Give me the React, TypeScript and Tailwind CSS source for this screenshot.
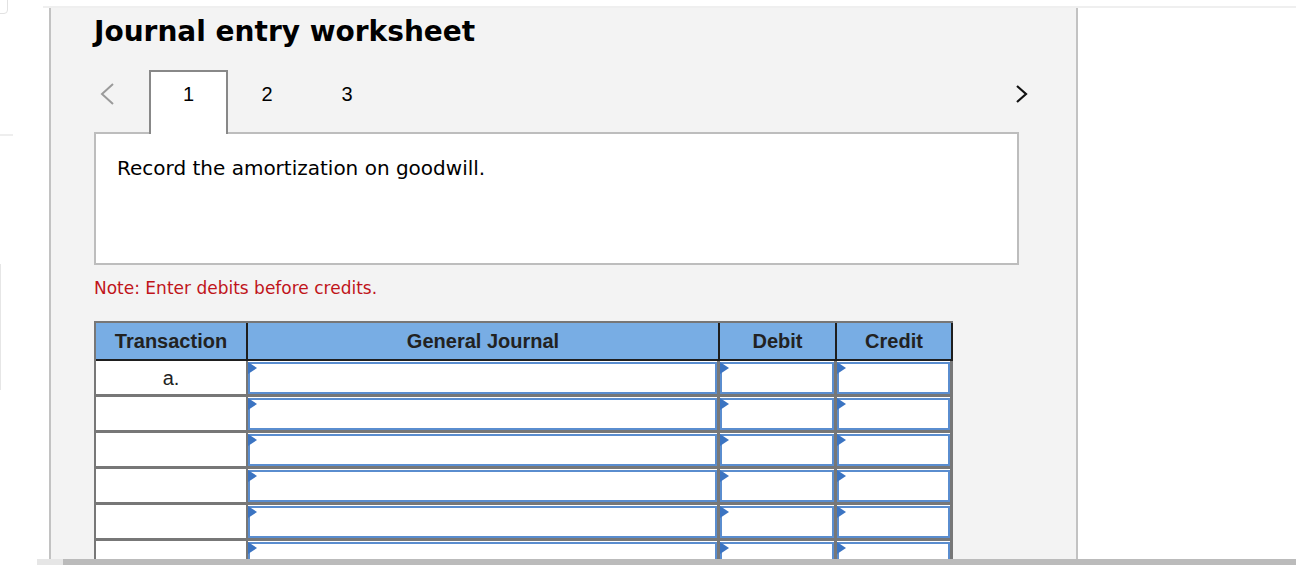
import React from 'react';

const COLS = ['w-[152px]', 'w-[472px]', 'w-[117px]', 'w-[116px]'];
const ROWS = ['a.', '', '', '', '', ''];

const verdana = { fontFamily: '"DejaVu Sans", Verdana, sans-serif' };
const arial = { fontFamily: '"Liberation Sans", Arial, sans-serif' };

const EntryInput = () => (
  <div className="relative h-full w-full border-2 border-[#5a8dcf] bg-white">
    <div className="absolute left-[-2px] top-[-2px] h-0 w-0 border-y-[6px] border-l-[9px] border-y-transparent border-l-[#3b74c2]" />
  </div>
);

const App = () => {
  return (
    <div className="relative h-[565px] w-[1296px] overflow-hidden bg-white">
      {/* stray page chrome on the left */}
      <div className="absolute left-[-8px] top-[-6px] h-[20px] w-[16px] rounded-[4px] border border-[#e2e2e2]" />
      <div className="absolute left-0 top-[134px] h-[2px] w-[13px] bg-[#eeeeee]" />
      <div className="absolute left-0 top-[264px] h-[126px] w-[1px] bg-[#e6e6e6]" />

      <div className="ml-[43px] mt-[6px] h-[2px] bg-[#efefef]" />

      <div className="ml-[49px] h-[557px] w-[1029px] border-x-2 border-[#c2c2c2] bg-[#f3f3f3] pl-[43px]">
        <h1 className="pt-[6px] text-[28px] font-bold leading-[36px] text-black" style={verdana}>
          Journal entry worksheet
        </h1>

        <div className="mt-[20px] flex h-[62px] items-start text-[20px] leading-[24px] text-black" style={arial}>
          <div className="flex h-[48px] w-[55px] items-center pl-[5px]">
            <svg width="16" height="24" viewBox="0 0 16 24">
              <path d="M14 2 L3 12 L14 22" fill="none" stroke="#9a9a9a" strokeWidth="2" />
            </svg>
          </div>
          <div className="relative z-10 flex h-[64px] w-[79px] justify-center border-x-2 border-t-2 border-[#888888] bg-white pt-[10px]">
            1
          </div>
          <div className="flex w-[78px] justify-center pt-[12px]">2</div>
          <div className="flex w-[82px] justify-center pt-[12px]">3</div>
          <div className="ml-auto mr-[46px] flex h-[48px] items-center">
            <svg width="16" height="24" viewBox="0 0 16 24">
              <path d="M3 4 L12 12 L3 20" fill="none" stroke="#111" strokeWidth="2.2" />
            </svg>
          </div>
        </div>

        <div className="h-[133px] w-[925px] border-2 border-[#bdbdbd] bg-white px-[21px] pt-[20px] text-[20px] leading-[28px] text-black" style={verdana}>
          Record the amortization on goodwill.
        </div>

        <p className="mt-[12px] text-[17px] leading-[22px] text-[#c0141a]" style={verdana}>
          Note: Enter debits before credits.
        </p>

        <div className="mt-[22px] w-[859px] border-l-2 border-t-2 border-[#777777]" style={arial}>
          <div className="flex h-[38px] bg-[#78ade4] text-[20px] font-bold text-[#222]">
            {['Transaction', 'General Journal', 'Debit', 'Credit'].map((h, i) => (
              <div key={h} className={`${COLS[i]} flex items-center justify-center border-b-2 border-r-2 border-[#1e1e1e]`}>
                {h}
              </div>
            ))}
          </div>
          {ROWS.map((label, r) => (
            <div key={r} className="flex h-[36px] bg-white">
              <div className={`${COLS[0]} flex items-center justify-center border-b-[3px] border-r-2 border-[#777777] text-[20px] text-[#222]`}>
                {label}
              </div>
              {[1, 2, 3].map(c => (
                <div key={c} className={`${COLS[c]} border-b-[3px] border-r-[3px] border-[#777777] pt-px`}>
                  <EntryInput />
                </div>
              ))}
            </div>
          ))}
        </div>
      </div>

      {/* horizontal scrollbar */}
      <div className="absolute bottom-0 left-[37px] right-0 flex h-[6px]">
        <div className="w-[26px] bg-[#e6e6e6]" />
        <div className="flex-1 bg-[#bbbbbb]" />
      </div>
    </div>
  );
};

export default App;
